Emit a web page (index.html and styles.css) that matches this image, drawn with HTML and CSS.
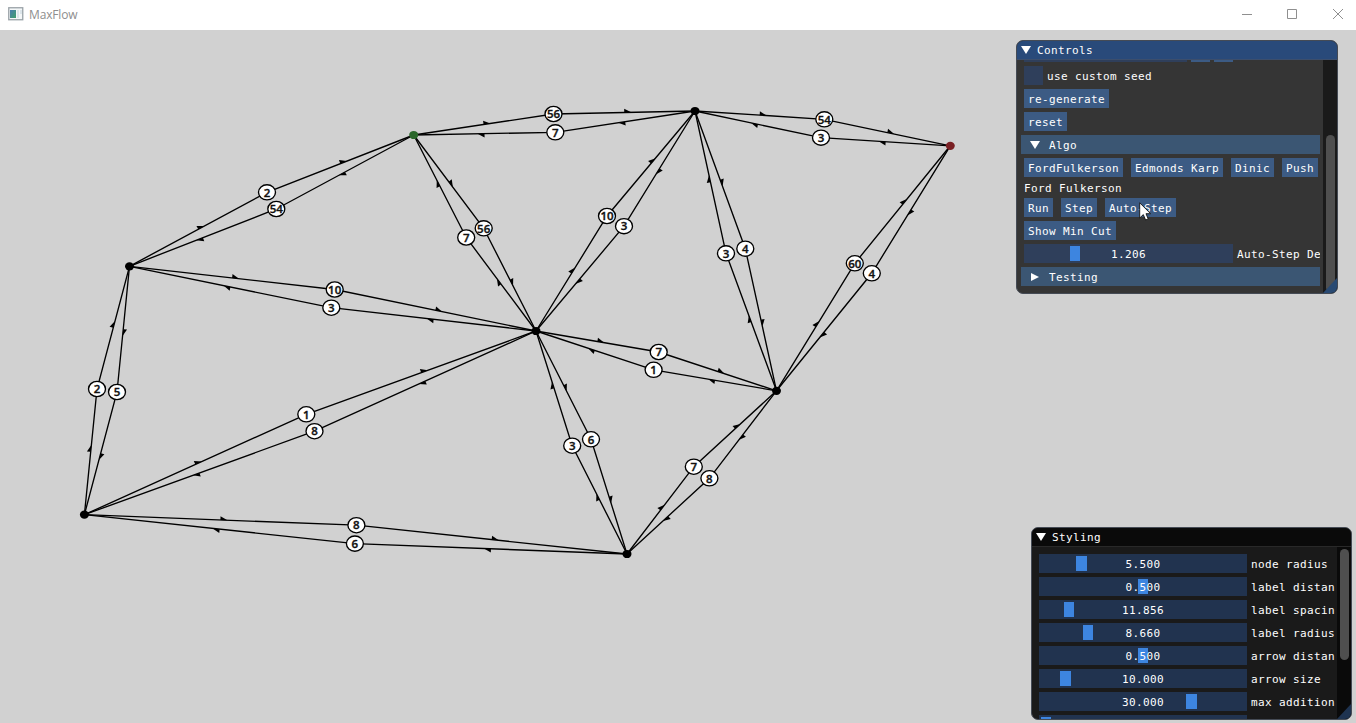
FILE: index.html
```html
<!DOCTYPE html>
<html lang="en">
<head>
<meta charset="utf-8">
<title>MaxFlow</title>
<link rel="stylesheet" href="styles.css">
</head>
<body>
<header class="titlebar">
  <svg class="app-icon" width="16" height="14" viewBox="0 0 16 14">
    <defs><linearGradient id="ig" x1="0" y1="0" x2="1" y2="1"><stop offset="0" stop-color="#4a7db0"/><stop offset="1" stop-color="#3fa06a"/></linearGradient></defs>
    <rect x=".75" y=".75" width="14" height="12" fill="#f4f7f8" stroke="#9aa2a7" stroke-width="1.3"/>
    <rect x="2" y="3" width="6" height="8" fill="url(#ig)"/>
    <rect x="9" y="3" width="2" height="8" fill="#dce5ea"/><rect x="12" y="3" width="2" height="4" fill="#dce5ea"/>
  </svg>
  <span class="app-name">MaxFlow</span>
  <svg class="window-buttons" width="102" height="12" viewBox="0 0 102 12" fill="none" stroke="#8f8f8f">
    <path d="M0 6.5H10M45.500 1.500H54.500V10.500H45.500ZM91 1L101 11M101 1L91 11"/>
  </svg>
</header>
<main class="canvas">
  <svg id="graph" width="1356" height="693" viewBox="0 30 1356 693"></svg>

  <section class="window controls">
    <h2 class="window-title"><i class="tri down"></i>Controls</h2>
    <div class="window-body">
      <div class="content">
        <div class="row cut"><span class="frame"></span><span class="btn"></span><span class="btn"></span></div>
        <div class="row check"><span class="box"></span><span class="text">use custom seed</span></div>
        <div class="row"><span class="btn">re-generate</span></div>
        <div class="row"><span class="btn">reset</span></div>
        <div class="row head"><i class="tri down"></i><span class="text">Algo</span></div>
        <div class="row"><span class="btn">FordFulkerson</span><span class="btn">Edmonds Karp</span><span class="btn">Dinic</span><span class="btn">Push</span></div>
        <div class="row line"><span class="text">Ford Fulkerson</span></div>
        <div class="row"><span class="btn">Run</span><span class="btn">Step</span><span class="btn">Auto-Step</span></div>
        <div class="row"><span class="btn">Show Min Cut</span></div>
        <div class="row field"><span class="frame"><b class="grab" style="left:46px"></b><em>1.206</em></span><span class="text">Auto-Step De</span></div>
        <div class="row head"><i class="tri right"></i><span class="text">Testing</span></div>
      </div>
      <div class="scroll"><div class="thumb"></div></div>
    </div>
    <i class="grip"></i>
  </section>

  <section class="window styling">
    <h2 class="window-title"><i class="tri down"></i>Styling</h2>
    <div class="window-body">
      <div class="content">
        <div class="row field"><span class="frame"><b class="grab wide" style="left:37px"></b><em>5.500</em></span><span class="text">node radius</span></div>
        <div class="row field"><span class="frame"><b class="grab" style="left:99px"></b><em>0.500</em></span><span class="text">label distan</span></div>
        <div class="row field"><span class="frame"><b class="grab" style="left:25px"></b><em>11.856</em></span><span class="text">label spacin</span></div>
        <div class="row field"><span class="frame"><b class="grab" style="left:44px"></b><em>8.660</em></span><span class="text">label radius</span></div>
        <div class="row field"><span class="frame"><b class="grab" style="left:99px"></b><em>0.500</em></span><span class="text">arrow distan</span></div>
        <div class="row field"><span class="frame"><b class="grab wide" style="left:21px"></b><em>10.000</em></span><span class="text">arrow size</span></div>
        <div class="row field"><span class="frame"><b class="grab wide" style="left:147px"></b><em>30.000</em></span><span class="text">max addition</span></div>
        <div class="row field"><span class="frame"><b class="grab" style="left:2px"></b></span></div>
      </div>
      <div class="scroll"><div class="thumb"></div></div>
    </div>
    <i class="grip"></i>
  </section>

  <svg class="cursor" width="14" height="20" viewBox="0 0 14 20"><path d="M.7 .8V16L4.300 12.600L6.600 18L9.200 16.900L7 11.700H11.600Z" fill="#fff" stroke="#111" stroke-width=".9"/></svg>
</main>
<script src="script.js"></script>
</body>
</html>
```
FILE: styles.css
```css
* { box-sizing: border-box; }
body { margin: 0; width: 1356px; height: 723px; overflow: hidden; background: #d1d1d1; font: 11px/13px "DejaVu Sans Mono", monospace; }
.titlebar { height: 30px; background: #fff; display: flex; align-items: center; padding: 0 12px 2px 8px; color: #8e8e8e; font: 12px/16px "Open Sans", sans-serif; }
.app-name { margin: 2px 0 0 5px; font-size: 12px; letter-spacing: -.15px; }
.window-buttons { margin-left: auto; }
.canvas { position: relative; height: 693px; }
#graph { display: block; }
.edge { fill: none; stroke: #000; stroke-width: 1.35; }
.label ellipse { fill: #fff; stroke: #000; stroke-width: 1.35; }
.label text { font: 600 11.5px "Open Sans", sans-serif; text-anchor: middle; fill: #111; stroke: #111; stroke-width: .35; }

.window { position: absolute; color: #fff; letter-spacing: .378px; border-radius: 7px; overflow: hidden; display: flex; flex-direction: column; border: 1px solid #454b55; }
.controls { left: 1016px; top: 10px; width: 322px; height: 254px; background: #353535; }
.styling { left: 1031px; top: 497px; width: 321px; height: 193px; background: #1a1a1a; }
.window-title { margin: 0; height: 19px; flex: none; padding: 0 0 0 4px; display: flex; align-items: center; gap: 6px; font: inherit; border-bottom: 1px solid #3c4e6c; }
.controls .window-title { background: #294a7a; }
.styling .window-title { background: #0a0a0a; border-color: #292929; }
.window-body { display: flex; flex: 1; min-height: 0; }
.content { display: flex; flex-direction: column; gap: 4px; overflow: hidden; flex: none; white-space: pre; }
.controls .content { width: 303px; padding-left: 7px; }
.styling .content { width: 303px; padding: 7px 0 0 7px; }
.row { height: 19px; flex: none; display: flex; align-items: center; gap: 8px; }
.text, .frame em { padding-top: 2px; }
.btn { height: 19px; padding: 4px 4px 2px; background: #3c5b84; }
.row.cut { height: 2px; gap: 4px; }
.cut .frame { width: 163px; height: 2px; }
.cut .btn { width: 19px; height: 2px; padding: 0; }
.row.check { gap: 4px; }
.box { width: 19px; height: 19px; background: #2f3f5b; }
.row.line { height: 13px; }
.row.head { margin-left: -3px; width: 299px; background: #3b5673; padding-left: 9px; gap: 9px; }
.row.field { gap: 4px; }
.frame { position: relative; flex: none; width: 209px; height: 19px; background: #2f3f5b; display: flex; align-items: center; justify-content: center; }
.styling .frame { width: 208px; background: #21334f; }
.frame em { position: relative; font-style: normal; }
.grab { position: absolute; top: 2px; width: 10px; height: 15px; background: #3d85e0; }
.grab.wide { width: 11px; }
.tri { width: 0; height: 0; flex: none; }
.tri.down { border: 5px solid transparent; border-top: 8px solid #fff; border-bottom: 0; }
.tri.right { border: 4.5px solid transparent; border-left: 8px solid #fff; border-right: 0; margin-left: 1px; }
.tri.right + .text { margin-left: 1px; }
.scroll { margin-left: auto; width: 14px; background: #1a1a1a; padding: 0 2px; }
.styling .scroll { background: #0a0a0a; }
.thumb { width: 9px; border-radius: 5px; background: #4f4f4f; }
.controls .thumb { margin: 75px 0 0 1px; height: 157px; }
.styling .thumb { margin: 2px 0 0 1px; height: 111px; }
.grip { position: absolute; right: 0; bottom: 0; width: 14px; height: 15px; background: #294a73; clip-path: polygon(100% 0, 100% 100%, 0 100%); }
.styling .grip { background: #1e3350; }
.cursor { position: absolute; left: 1139px; top: 172px; }
```
FILE: script.js
```js
const nodes = [[413.7,135,'#2a672a'],[695,111,'#000'],[950.3,145.8,'#7a2024'],[129.5,266.3,'#000'],[536,331,'#000'],[776.5,390.800,'#000'],[84.400,514.700,'#000'],[627,554,'#000']];
// from, to, label x, label y, residual capacity
const edges = [
  [0,1,553.5,114,56],[1,0,555.3,132.3,7],[1,2,824.300,119.300,54],[2,1,821,137.700,3],
  [3,0,267,192.300,2],[0,3,276.300,209,54],[0,4,483.700,228.300,56],[4,0,466.200,237.500,7],
  [4,1,607,216,10],[1,4,624,226.200,3],[5,1,726,253.300,3],[1,5,745.300,248.700,4],
  [5,2,854.800,263.300,60],[2,5,871.800,273.300,4],[3,4,334.700,289.500,10],[4,3,331.300,307.700,3],
  [4,5,658.700,352,7],[5,4,653.600,369.800,1],[6,3,97,389,2],[3,6,117,392,5],
  [6,4,306.300,414.300,1],[4,6,314.500,431.200,8],[7,4,572.200,445.700,3],[4,7,591,439.300,6],
  [7,5,693.800,466.700,7],[5,7,709.400,478.300,8],[6,7,356.400,525.200,8],[7,6,354.900,543.600,6]
];
const half = (x1, y1, x2, y2) => {
  const d = Math.hypot(x2 - x1, y2 - y1), u = (x2 - x1) / d, v = (y2 - y1) / d;
  const x = (x1 + x2) / 2, y = (y1 + y2) / 2;
  return `<path d="M${x} ${y}L${x + 7 * u} ${y + 7 * v}L${x + 3.8 * v} ${y - 3.8 * u}Z"/>`;
};
let lines = '', labels = '';
for (const [a, b, x, y, n] of edges) {
  const [ax, ay] = nodes[a], [bx, by] = nodes[b];
  lines += `<polyline class="edge" points="${ax},${ay} ${x},${y} ${bx},${by}"/>` + half(ax, ay, x, y) + half(x, y, bx, by);
  labels += `<g class="label"><ellipse cx="${x}" cy="${y}" rx="8.500" ry="7.600"/><text x="${x}" y="${y + 4.2}">${n}</text></g>`;
}
const dots = nodes.map(([x, y, c]) => `<ellipse cx="${x}" cy="${y}" rx="4.500" ry="4.100" fill="${c}"/>`).join('');
document.getElementById('graph').innerHTML = lines + labels + dots;
```
